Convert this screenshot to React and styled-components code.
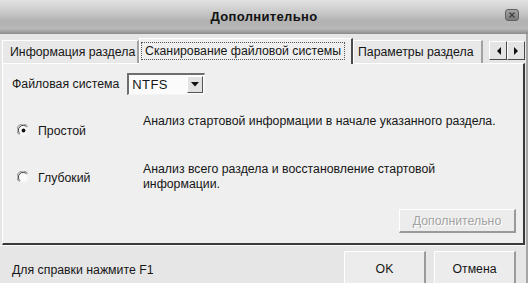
import React from "react";
import styled, { createGlobalStyle } from "styled-components";

const Global = createGlobalStyle`
  html, body { margin: 0; padding: 0; background: #e6e6e6; }
  body { font-family: "Liberation Sans", Arial, sans-serif; font-size: 12.3px; color: #161616; }
  * { box-sizing: border-box; }
`;

const Window = styled.div`
  width: 528px;
  height: 283px;
  overflow: hidden;
  display: flex;
  flex-direction: column;
  background: #e6e6e6;
`;

const TitleBar = styled.div`
  height: 34px;
  flex: none;
  display: flex;
  align-items: center;
  justify-content: center;
  position: relative;
  background: linear-gradient(#e2e2e2 0%, #cdcdcd 30%, #b2b2b2 62%, #b8b8b8 85%, #8a8a8a 100%);
`;

const Title = styled.div`
  font-weight: bold;
  font-size: 13px;
  color: #111;
  letter-spacing: 0.35px;
  padding-bottom: 1px;
`;

const CloseBtn = styled.div`
  position: absolute;
  right: 9px;
  top: 9px;
  width: 14px;
  height: 12px;
  border-radius: 3px;
  background: linear-gradient(#a4a4a4, #7a7a7a);
  border: 1px solid #626262;
  display: flex;
  align-items: center;
  justify-content: center;
`;

const Content = styled.div`
  flex: 1;
  min-height: 0;
  display: flex;
  flex-direction: column;
  border-right: 2px solid #a6a6a6;
`;

const Body = styled.div`
  flex: none;
  padding: 0 1px 0 2px;
  display: flex;
  flex-direction: column;
`;

const TabStrip = styled.div`
  height: 29px;
  display: flex;
  align-items: flex-end;
`;

const Tab = styled.div`
  width: ${p => p.$w}px;
  height: ${p => (p.$active ? 26 : 23)}px;
  padding-left: ${p => p.$pl}px;
  padding-bottom: ${p => (p.$active ? 2 : 1)}px;
  display: flex;
  align-items: center;
  background: ${p => (p.$active ? "#efefef" : "#e8e8e8")};
  border-top: 1px solid #ffffff;
  border-left: 1px solid #ffffff;
  border-right: 2px solid ${p => (p.$active ? "#4a4a4a" : "#a2a2a2")};
  margin-bottom: ${p => (p.$active ? -1 : 0)}px;
  position: relative;
  z-index: ${p => (p.$active ? 2 : 1)};
  white-space: nowrap;
`;

const Focus = styled.span`
  outline: 1px dotted #555;
  outline-offset: 1px;
  padding: 0 2px;
`;

const Arrows = styled.div`
  margin-left: auto;
  margin-bottom: 3px;
  display: flex;
`;

const ArrowBtn = styled.div`
  width: 18px;
  height: 19px;
  background: #e4e4e4;
  border-top: 1px solid #fff;
  border-left: 1px solid #fff;
  border-right: 1px solid #4a4a4a;
  border-bottom: 1px solid #4a4a4a;
  display: flex;
  align-items: center;
  justify-content: center;
`;

const Panel = styled.div`
  height: 182px;
  background: #efefef;
  border-top: 1px solid #ffffff;
  border-left: 1px solid #ffffff;
  border-right: 2px solid #3a3a3a;
  border-bottom: 2px solid #3a3a3a;
  padding: 9px 7px 0 9px;
  display: flex;
  flex-direction: column;
`;

const FsRow = styled.div`
  display: flex;
  align-items: center;
  gap: 8px;
`;

const Combo = styled.div`
  width: 78px;
  height: 22px;
  background: #fbfbfb;
  border-top: 2px solid #6e6e6e;
  border-left: 2px solid #6e6e6e;
  border-right: 1px solid #f4f4f4;
  border-bottom: 1px solid #f4f4f4;
  display: flex;
  align-items: center;
  padding-left: 3px;
`;

const ComboText = styled.span`
  flex: 1;
  font-size: 13px;
  letter-spacing: 0.4px;
`;

const DropBtn = styled.div`
  width: 16px;
  height: 17px;
  margin-right: 1px;
  background: #e2e2e2;
  border-top: 1px solid #fff;
  border-left: 1px solid #fff;
  border-right: 1px solid #555;
  border-bottom: 1px solid #555;
  display: flex;
  align-items: center;
  justify-content: center;
`;

const OptionRow = styled.div`
  display: flex;
  align-items: stretch;
  margin-top: ${p => p.$mt}px;
`;

const RadioLabel = styled.div`
  width: 131px;
  flex: none;
  display: flex;
  align-items: center;
  gap: 8px;
  padding-left: 5px;
  padding-top: ${p => p.$pt}px;
`;

const Desc = styled.div`
  line-height: 15px;
  min-height: 30px;
`;

const ButtonRow = styled.div`
  margin-top: auto;
  margin-bottom: 10px;
  display: flex;
  justify-content: flex-end;
`;

const Button = styled.div`
  width: ${p => p.$w}px;
  height: ${p => p.$h || 24}px;
  display: flex;
  align-items: center;
  justify-content: center;
  background: #ececec;
  border-top: 1px solid #ffffff;
  border-left: 1px solid #ffffff;
  border-right: 2px solid #9a9a9a;
  border-bottom: 2px solid #9a9a9a;
  color: ${p => (p.$disabled ? "#a2a2a2" : "#161616")};
  text-shadow: ${p => (p.$disabled ? "1px 1px 0 #ffffff" : "none")};
`;

const Status = styled.div`
  flex: 1;
  display: flex;
  align-items: flex-start;
  padding: 5px 0 0 12px;
  border-top: 1px solid #fafafa;
`;

const StatusText = styled.div`
  padding-top: 12px;
  flex: 1;
`;

const StatusButtons = styled.div`
  display: flex;
  gap: 8px;
  margin-right: 10px;
`;

const Radio = ({ checked }) => (
  <svg width="13" height="13" viewBox="0 0 13 13">
    <circle cx="6.5" cy="6.5" r="6" fill="#f2f2f2" />
    <path d="M10.7 2.3 A6 6 0 1 0 2.3 10.7" fill="none" stroke="#8a8a8a" strokeWidth="1" />
    <path d="M9.8 3.2 A4.7 4.7 0 1 0 3.2 9.8" fill="none" stroke="#3a3a3a" strokeWidth="1" />
    <circle cx="6.5" cy="6.5" r="4" fill="#fbfbfb" />
    {checked && <circle cx="6.5" cy="6.5" r="1.9" fill="#111" />}
  </svg>
);

const TriLeft = () => (
  <svg width="5" height="8" viewBox="0 0 5 8"><path d="M5 0 L1 4 L5 8 Z" fill="#111" /></svg>
);
const TriRight = () => (
  <svg width="5" height="8" viewBox="0 0 5 8"><path d="M0 0 L4 4 L0 8 Z" fill="#111" /></svg>
);
const TriDown = () => (
  <svg width="8" height="5" viewBox="0 0 8 5"><path d="M0 0 L8 0 L4 4.5 Z" fill="#111" /></svg>
);

export default function App() {
  return (
    <>
      <Global />
      <Window>
        <TitleBar>
          <Title>Дополнительно</Title>
          <CloseBtn>
            <svg width="6" height="6" viewBox="0 0 6 6"><path d="M0.5 0.5 L5.5 5.5 M5.5 0.5 L0.5 5.5" stroke="#3c3c3c" strokeWidth="1.2" /></svg>
          </CloseBtn>
        </TitleBar>
        <Content>
          <Body>
            <TabStrip>
              <Tab $w={137} $pl={7}>Информация раздела</Tab>
              <Tab $w={214} $pl={3} $active><Focus>Сканирование файловой системы</Focus></Tab>
              <Tab $w={130} $pl={4}>Параметры раздела</Tab>
              <Arrows>
                <ArrowBtn><TriLeft /></ArrowBtn>
                <ArrowBtn><TriRight /></ArrowBtn>
              </Arrows>
            </TabStrip>
            <Panel>
              <FsRow>
                <span>Файловая система</span>
                <Combo>
                  <ComboText>NTFS</ComboText>
                  <DropBtn><TriDown /></DropBtn>
                </Combo>
              </FsRow>
              <OptionRow $mt={19}>
                <RadioLabel $pt={3}><Radio checked /> Простой</RadioLabel>
                <Desc>Анализ стартовой информации в начале указанного раздела.</Desc>
              </OptionRow>
              <OptionRow $mt={18}>
                <RadioLabel $pt={1}><Radio /> Глубокий</RadioLabel>
                <Desc>Анализ всего раздела и восстановление стартовой<br />информации.</Desc>
              </OptionRow>
              <ButtonRow>
                <Button $w={117} $disabled>Дополнительно</Button>
              </ButtonRow>
            </Panel>
          </Body>
          <Status>
            <StatusText>Для справки нажмите F1</StatusText>
            <StatusButtons>
              <Button $w={82} $h={36}>OK</Button>
              <Button $w={82} $h={36}>Отмена</Button>
            </StatusButtons>
          </Status>
        </Content>
      </Window>
    </>
  );
}
